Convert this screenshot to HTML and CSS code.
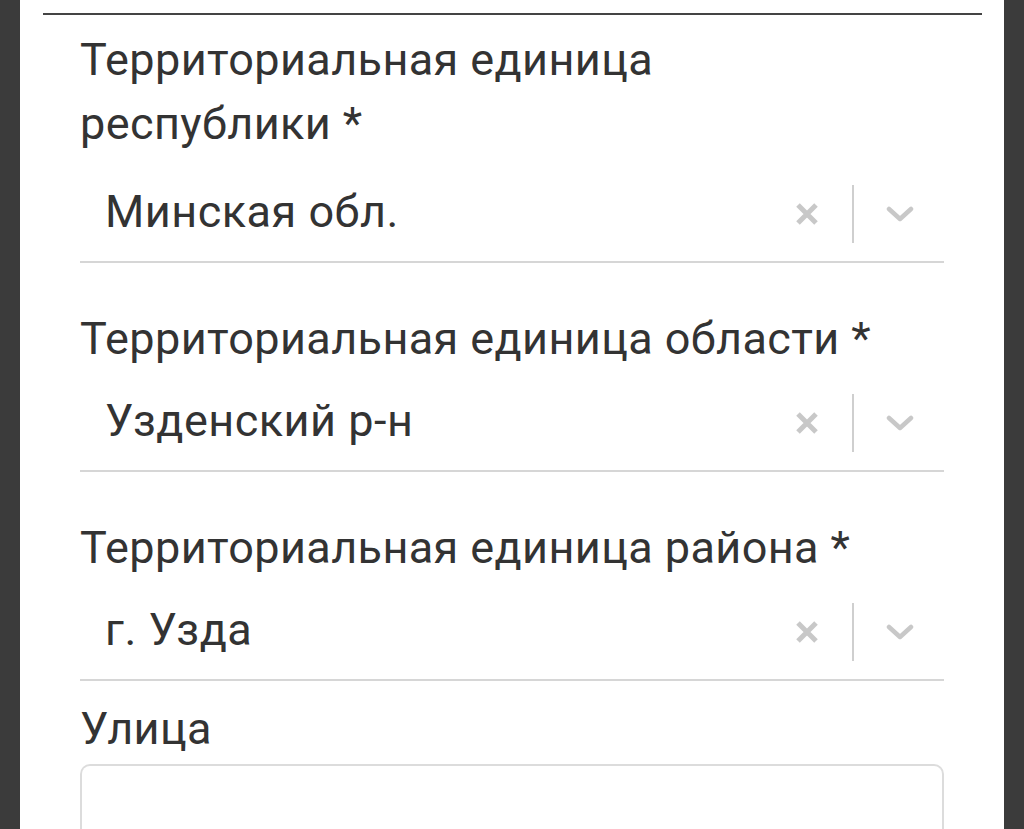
FILE: index.html
```html
<!DOCTYPE html>
<html lang="ru">
<head>
<meta charset="utf-8">
<link rel="stylesheet" href="styles.css">
</head>
<body>
<div class="card">
  <div class="rule"></div>
  <form class="form">
    <div class="field field-first">
      <label class="label">Территориальная единица республики *</label>
      <div class="select">
        <div class="value">Минская обл.</div>
        <div class="indicators">
          <svg class="clear" viewBox="0 0 26 26"><path d="M4 4L22 22M22 4L4 22"/></svg>
          <span class="sep"></span>
          <svg class="chev" viewBox="0 0 28 16"><path d="M3 3L14 13L25 3"/></svg>
        </div>
      </div>
    </div>
    <div class="field">
      <label class="label">Территориальная единица области *</label>
      <div class="select">
        <div class="value">Узденский р-н</div>
        <div class="indicators">
          <svg class="clear" viewBox="0 0 26 26"><path d="M4 4L22 22M22 4L4 22"/></svg>
          <span class="sep"></span>
          <svg class="chev" viewBox="0 0 28 16"><path d="M3 3L14 13L25 3"/></svg>
        </div>
      </div>
    </div>
    <div class="field">
      <label class="label">Территориальная единица района *</label>
      <div class="select">
        <div class="value">г. Узда</div>
        <div class="indicators">
          <svg class="clear" viewBox="0 0 26 26"><path d="M4 4L22 22M22 4L4 22"/></svg>
          <span class="sep"></span>
          <svg class="chev" viewBox="0 0 28 16"><path d="M3 3L14 13L25 3"/></svg>
        </div>
      </div>
    </div>
    <div class="field field-text">
      <label class="label">Улица</label>
      <div class="input"></div>
    </div>
  </form>
</div>
</body>
</html>
```
FILE: styles.css
```css
html, body {
  margin: 0;
  padding: 0;
  height: 100%;
  background: #3b3b3b;
  overflow: hidden;
}
body {
  font-family: Roboto, "Noto Sans", sans-serif;
  color: #333;
}
.card {
  margin: 0 20px;
  background: #fff;
  height: 100%;
  padding-top: 13px;
  box-sizing: border-box;
  overflow: hidden;
}
.rule {
  height: 2px;
  background: #444;
  margin: 0 22px 0 23px;
}
.form {
  padding: 0 60px;
  display: flex;
  flex-direction: column;
}
.field {
  display: flex;
  flex-direction: column;
}
.label {
  display: block;
  max-width: 810px;
  font-size: 45px;
  letter-spacing: 0.4px;
  line-height: 64px;
  margin-top: 44px;
}
.field-first .label {
  margin-top: 13px;
  margin-bottom: 6px;
}
.field-text .label {
  margin-top: 16px;
}
.select {
  display: flex;
  align-items: center;
  height: 99px;
  border-bottom: 2px solid #d6d6d6;
}
.value {
  flex: 1;
  padding-left: 25px;
  font-size: 45px;
  letter-spacing: 0.5px;
  line-height: 60px;
}
.indicators {
  display: flex;
  align-items: center;
  padding-right: 30px;
  gap: 32px;
  margin-top: 4px;
}
.clear {
  width: 26px;
  height: 26px;
  fill: none;
  stroke: #c8c8c8;
  stroke-width: 5;
}
.sep {
  width: 2px;
  height: 58px;
  background: #cfcfcf;
}
.chev {
  width: 28px;
  height: 16px;
  fill: none;
  stroke: #c8c8c8;
  stroke-width: 4.5;
  stroke-linecap: round;
  stroke-linejoin: round;
}
.input {
  margin-top: 3px;
  height: 64px;
  border: 2px solid #dcdcdc;
  border-bottom: 0;
  border-radius: 10px 10px 0 0;
}
```
